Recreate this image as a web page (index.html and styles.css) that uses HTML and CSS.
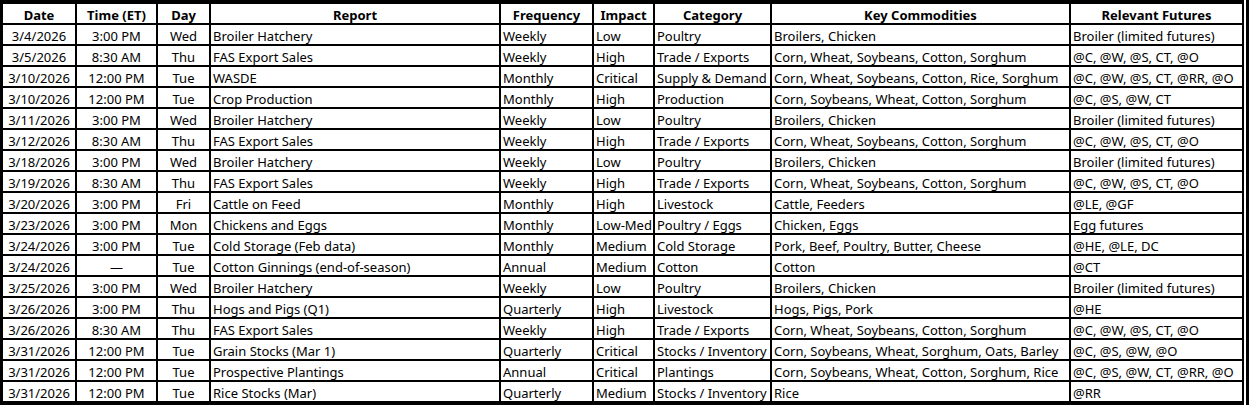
FILE: index.html
```html
<!DOCTYPE html>
<html>
<head>
<meta charset="utf-8">
<link rel="stylesheet" href="styles.css">
</head>
<body>
<div class="frame">
<div class="inner">
<div class="sheet">
<div class="h">Date</div><div class="h">Time (ET)</div><div class="h">Day</div><div class="h">Report</div><div class="h">Frequency</div><div class="h">Impact</div><div class="h">Category</div><div class="h">Key Commodities</div><div class="h">Relevant Futures</div>

<div class="c">3/4/2026</div><div class="c">3:00 PM</div><div class="c">Wed</div><div class="l">Broiler Hatchery</div><div class="l">Weekly</div><div class="l">Low</div><div class="l">Poultry</div><div class="l">Broilers, Chicken</div><div class="l">Broiler (limited futures)</div>

<div class="c">3/5/2026</div><div class="c">8:30 AM</div><div class="c">Thu</div><div class="l">FAS Export Sales</div><div class="l">Weekly</div><div class="l">High</div><div class="l">Trade / Exports</div><div class="l">Corn, Wheat, Soybeans, Cotton, Sorghum</div><div class="l">@C, @W, @S, CT, @O</div>

<div class="c">3/10/2026</div><div class="c">12:00 PM</div><div class="c">Tue</div><div class="l">WASDE</div><div class="l">Monthly</div><div class="l">Critical</div><div class="l">Supply &amp; Demand</div><div class="l">Corn, Wheat, Soybeans, Cotton, Rice, Sorghum</div><div class="l">@C, @W, @S, CT, @RR, @O</div>

<div class="c">3/10/2026</div><div class="c">12:00 PM</div><div class="c">Tue</div><div class="l">Crop Production</div><div class="l">Monthly</div><div class="l">High</div><div class="l">Production</div><div class="l">Corn, Soybeans, Wheat, Cotton, Sorghum</div><div class="l">@C, @S, @W, CT</div>

<div class="c">3/11/2026</div><div class="c">3:00 PM</div><div class="c">Wed</div><div class="l">Broiler Hatchery</div><div class="l">Weekly</div><div class="l">Low</div><div class="l">Poultry</div><div class="l">Broilers, Chicken</div><div class="l">Broiler (limited futures)</div>

<div class="c">3/12/2026</div><div class="c">8:30 AM</div><div class="c">Thu</div><div class="l">FAS Export Sales</div><div class="l">Weekly</div><div class="l">High</div><div class="l">Trade / Exports</div><div class="l">Corn, Wheat, Soybeans, Cotton, Sorghum</div><div class="l">@C, @W, @S, CT, @O</div>

<div class="c">3/18/2026</div><div class="c">3:00 PM</div><div class="c">Wed</div><div class="l">Broiler Hatchery</div><div class="l">Weekly</div><div class="l">Low</div><div class="l">Poultry</div><div class="l">Broilers, Chicken</div><div class="l">Broiler (limited futures)</div>

<div class="c">3/19/2026</div><div class="c">8:30 AM</div><div class="c">Thu</div><div class="l">FAS Export Sales</div><div class="l">Weekly</div><div class="l">High</div><div class="l">Trade / Exports</div><div class="l">Corn, Wheat, Soybeans, Cotton, Sorghum</div><div class="l">@C, @W, @S, CT, @O</div>

<div class="c">3/20/2026</div><div class="c">3:00 PM</div><div class="c">Fri</div><div class="l">Cattle on Feed</div><div class="l">Monthly</div><div class="l">High</div><div class="l">Livestock</div><div class="l">Cattle, Feeders</div><div class="l">@LE, @GF</div>

<div class="c">3/23/2026</div><div class="c">3:00 PM</div><div class="c">Mon</div><div class="l">Chickens and Eggs</div><div class="l">Monthly</div><div class="l">Low-Med</div><div class="l">Poultry / Eggs</div><div class="l">Chicken, Eggs</div><div class="l">Egg futures</div>

<div class="c">3/24/2026</div><div class="c">3:00 PM</div><div class="c">Tue</div><div class="l">Cold Storage (Feb data)</div><div class="l">Monthly</div><div class="l">Medium</div><div class="l">Cold Storage</div><div class="l">Pork, Beef, Poultry, Butter, Cheese</div><div class="l">@HE, @LE, DC</div>

<div class="c">3/24/2026</div><div class="c">—</div><div class="c">Tue</div><div class="l">Cotton Ginnings (end-of-season)</div><div class="l">Annual</div><div class="l">Medium</div><div class="l">Cotton</div><div class="l">Cotton</div><div class="l">@CT</div>

<div class="c">3/25/2026</div><div class="c">3:00 PM</div><div class="c">Wed</div><div class="l">Broiler Hatchery</div><div class="l">Weekly</div><div class="l">Low</div><div class="l">Poultry</div><div class="l">Broilers, Chicken</div><div class="l">Broiler (limited futures)</div>

<div class="c">3/26/2026</div><div class="c">3:00 PM</div><div class="c">Thu</div><div class="l">Hogs and Pigs (Q1)</div><div class="l">Quarterly</div><div class="l">High</div><div class="l">Livestock</div><div class="l">Hogs, Pigs, Pork</div><div class="l">@HE</div>

<div class="c">3/26/2026</div><div class="c">8:30 AM</div><div class="c">Thu</div><div class="l">FAS Export Sales</div><div class="l">Weekly</div><div class="l">High</div><div class="l">Trade / Exports</div><div class="l">Corn, Wheat, Soybeans, Cotton, Sorghum</div><div class="l">@C, @W, @S, CT, @O</div>

<div class="c">3/31/2026</div><div class="c">12:00 PM</div><div class="c">Tue</div><div class="l">Grain Stocks (Mar 1)</div><div class="l">Quarterly</div><div class="l">Critical</div><div class="l">Stocks / Inventory</div><div class="l">Corn, Soybeans, Wheat, Sorghum, Oats, Barley</div><div class="l">@C, @S, @W, @O</div>

<div class="c">3/31/2026</div><div class="c">12:00 PM</div><div class="c">Tue</div><div class="l">Prospective Plantings</div><div class="l">Annual</div><div class="l">Critical</div><div class="l">Plantings</div><div class="l">Corn, Soybeans, Wheat, Cotton, Sorghum, Rice</div><div class="l">@C, @S, @W, CT, @RR, @O</div>

<div class="c">3/31/2026</div><div class="c">12:00 PM</div><div class="c">Tue</div><div class="l">Rice Stocks (Mar)</div><div class="l">Quarterly</div><div class="l">Medium</div><div class="l">Stocks / Inventory</div><div class="l">Rice</div><div class="l">@RR</div>
</div>
</div>
</div>
</body>
</html>
```
FILE: styles.css
```css
html, body {
  margin: 0;
  padding: 0;
  background: #000;
}
.frame {
  width: 1249px;
  height: 405px;
  box-sizing: border-box;
  background: #000;
  padding-right: 3px;
  display: flex;
  overflow: hidden;
}
.inner {
  background: #fff;
  padding-right: 2px;
  align-self: flex-start;
}
.sheet {
  display: grid;
  grid-template-columns: 72px 79px 51px 288px 91px 59px 115px 297px 171px;
  grid-auto-rows: 19px;
  gap: 2px;
  background: #000;
  padding: 4px 2px 4px 3px;
  font-family: "Noto Sans", "Liberation Sans", sans-serif;
  font-size: 13px;
  color: #000;
}
.sheet > div {
  background: #fff;
  white-space: nowrap;
  overflow: hidden;
  line-height: 19px;
  padding-top: 2px;
  box-sizing: border-box;
}
.h {
  font-weight: bold;
  text-align: center;
}
.c {
  text-align: center;
}
.l {
  text-align: left;
  padding-left: 2px;
}
```
